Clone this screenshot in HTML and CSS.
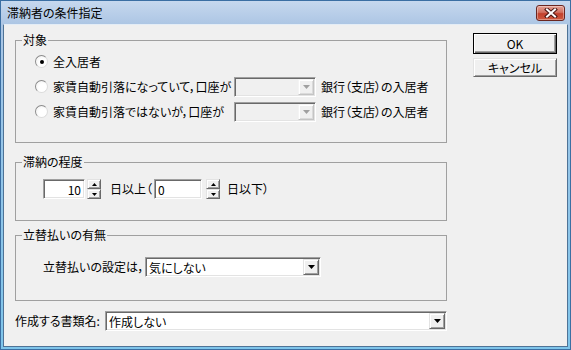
FILE: index.html
```html
<!DOCTYPE html>
<html lang="ja">
  <head>
    <meta charset="UTF-8" />
    <meta name="viewport" content="width=device-width, initial-scale=1.0" />
    <title>滞納者の条件指定</title>
    <link rel="stylesheet" href="styles.css">
  </head>
  <body>
    <div class="window">
      <div class="titlebar">
        <span class="title">滞納者の条件指定</span>
        <span class="closeBtn">
          <svg width="14" height="10" viewBox="0 0 14 10">
            <path d="M3 1.5L11 8.5M11 1.5L3 8.5" stroke="#4a1612" stroke-width="4" stroke-linecap="square" />
            <path d="M3 1.5L11 8.5M11 1.5L3 8.5" stroke="#fff" stroke-width="2" stroke-linecap="square" />
          </svg>
        </span>
      </div>

      <div class="client">
        <div class="main">
          <fieldset class="group">
            <legend>対象</legend>
            <div class="targetBody">
              <span class="radio checked"></span>
              <span class="wide">全入居者</span>

              <span class="radio"></span>
              <span>家賃自動引落になっていて，口座が</span>
              <div class="combo disabled">
                <span class="comboValue"></span>
                <span class="dropBtn">
                  <svg width="7" height="4"><path d="M0 0h7L3.5 4z" /></svg>
                </span>
              </div>
              <span class="after">銀行（支店）の入居者</span>

              <span class="radio"></span>
              <span>家賃自動引落ではないが，口座が</span>
              <div class="combo disabled">
                <span class="comboValue"></span>
                <span class="dropBtn">
                  <svg width="7" height="4"><path d="M0 0h7L3.5 4z" /></svg>
                </span>
              </div>
              <span class="after">銀行（支店）の入居者</span>
            </div>
          </fieldset>

          <fieldset class="group daysGroup">
            <legend>滞納の程度</legend>
            <div class="daysBody">
              <span class="edit num" style="width: 42px">10</span>
              <span class="spin">
                <span class="spinBtn"><svg width="5" height="3"><path d="M2.5 0L5 3H0z" /></svg></span>
                <span class="spinBtn"><svg width="5" height="3"><path d="M0 0h5L2.5 3z" /></svg></span>
              </span>
              <span class="unit">日以上（</span>
              <span class="edit" style="width: 48px">0</span>
              <span class="spin spin2">
                <span class="spinBtn"><svg width="5" height="3"><path d="M2.5 0L5 3H0z" /></svg></span>
                <span class="spinBtn"><svg width="5" height="3"><path d="M0 0h5L2.5 3z" /></svg></span>
              </span>
              <span class="unit unit2">日以下）</span>
            </div>
          </fieldset>

          <fieldset class="group advanceGroup">
            <legend>立替払いの有無</legend>
            <div class="advanceBody">
              <span class="advanceLabel">立替払いの設定は，</span>
              <div class="combo advanceCombo">
                <span class="comboValue">気にしない</span>
                <span class="dropBtn">
                  <svg width="7" height="4"><path d="M0 0h7L3.5 4z" /></svg>
                </span>
              </div>
            </div>
          </fieldset>

          <div class="docRow">
            <span class="docLabel">作成する書類名:</span>
            <div class="combo docCombo">
              <span class="comboValue">作成しない</span>
              <span class="dropBtn">
                <svg width="7" height="4"><path d="M0 0h7L3.5 4z" /></svg>
              </span>
            </div>
          </div>
        </div>

        <div class="actions">
          <button class="btn default">OK</button>
          <button class="btn cancel">キャンセル</button>
        </div>
      </div>
    </div>
  </body>
</html>
```

FILE: styles.css
```css
* {
  box-sizing: border-box;
}

body {
  margin: 0;
  font-family: "Noto Sans CJK JP", sans-serif;
  font-size: 12px;
  line-height: 14px;
  color: #000;
  font-feature-settings: "palt";
}

.window {
  width: 571px;
  height: 350px;
  display: flex;
  flex-direction: column;
  border: 1px solid #3b6fa3;
  background: linear-gradient(#c6d8ee 0, #adc6e4 23px, #9ec6e8 80px, #7ec4ea 100%);
}

.titlebar {
  height: 23px;
  display: flex;
  align-items: center;
  padding: 0 5px 0 6px;
}

.closeBtn {
  margin-left: auto;
  width: 29px;
  height: 16px;
  display: flex;
  align-items: center;
  justify-content: center;
  border: 1px solid #6b2620;
  border-radius: 3px;
  background: linear-gradient(#e4a195 0, #d2705f 45%, #c2402c 55%, #cf5a3f 100%);
  box-shadow: inset 0 0 0 1px rgba(255, 255, 255, 0.35);
}

.client {
  flex: 1;
  margin: 0 2px 2px;
  border: 1px solid #4f7396;
  border-top-color: #e4edf6;
  background: #f0f0f0;
  display: flex;
  padding: 8px 10px 0 11px;
}

.main {
  width: 432px;
}

/* group boxes */
.group {
  margin: 0;
  padding: 0;
  min-width: 0;
  border: 1px solid #a0a0a0;
}

.group legend {
  margin-left: 6px;
  padding: 0 1px;
  line-height: 14px;
}

.daysGroup {
  margin-top: 12px;
}

.advanceGroup {
  margin-top: 7px;
}

.targetBody {
  height: 95px;
  padding: 2px 0 0 19px;
  display: grid;
  grid-template-columns: 18px 181px 82px auto;
  grid-auto-rows: 25px;
  align-items: center;
  align-content: start;
}

.wide {
  grid-column: 2 / 5;
}

.after {
  margin-left: 5px;
}

.radio {
  width: 13px;
  height: 13px;
  border-radius: 50%;
  border: 1px solid;
  border-color: #8c8c8c #dcdcdc #dcdcdc #8c8c8c;
  background: radial-gradient(circle at 60% 60%, #fff 40%, #ececec 100%);
  display: flex;
  align-items: center;
  justify-content: center;
}

.radio.checked::after {
  content: "";
  width: 4px;
  height: 4px;
  border-radius: 50%;
  background: #000;
}

/* edit fields and combos */
.edit,
.combo {
  height: 20px;
  background: #fff;
  border: 1px solid;
  border-color: #a0a0a0 #fff #fff #a0a0a0;
  box-shadow: inset 1px 1px 0 #696969, inset -1px -1px 0 #e3e3e3;
}

.edit {
  padding: 2px 3px 0;
  line-height: 16px;
}

.edit.num {
  text-align: right;
}

.combo {
  display: flex;
  padding: 1px;
}

.comboValue {
  flex: 1;
  padding: 1px 0 0 2px;
  line-height: 15px;
  white-space: nowrap;
}

.dropBtn,
.spinBtn,
.btn {
  background: #f0f0f0;
  border: 1px solid;
  border-color: #e3e3e3 #696969 #696969 #e3e3e3;
  box-shadow: inset 1px 1px 0 #fff, inset -1px -1px 0 #a0a0a0;
}

.dropBtn {
  width: 16px;
  display: flex;
  align-items: center;
  justify-content: center;
}

.dropBtn svg,
.spinBtn svg {
  fill: #000;
}

.combo.disabled {
  background: #f0f0f0;
}

.combo.disabled .dropBtn {
  border-color: #f4f4f4 #c4c4c4 #c4c4c4 #f4f4f4;
  box-shadow: inset 1px 1px 0 #fff, inset -1px -1px 0 #dadada;
}

.combo.disabled .dropBtn svg {
  fill: #a0a0a0;
}

.daysBody {
  height: 51px;
  padding: 10px 0 0 27px;
  display: flex;
  align-items: flex-start;
}

.spin {
  width: 14px;
  height: 20px;
  margin-left: 2px;
  display: flex;
  flex-direction: column;
}

.spin2 {
  margin-left: 4px;
}

.spinBtn {
  height: 10px;
  display: flex;
  align-items: center;
  justify-content: center;
}

.unit {
  line-height: 20px;
  margin: 0 2px 0 9px;
}

.unit2 {
  margin-left: 7px;
}

.advanceBody {
  height: 58px;
  padding: 15px 0 0 27px;
  display: flex;
  align-items: flex-start;
}

.advanceLabel {
  line-height: 20px;
  width: 102px;
}

.advanceCombo {
  width: 176px;
}

.docRow {
  margin-top: 10px;
  display: flex;
  align-items: center;
}

.docLabel {
  width: 90px;
}

.docCombo {
  flex: 1;
}

/* buttons */
.actions {
  margin-left: 26px;
  width: 84px;
  display: flex;
  flex-direction: column;
}

.btn {
  font: inherit;
  font-feature-settings: "palt";
  padding: 0;
  color: #000;
  display: flex;
  align-items: center;
  justify-content: center;
}

.btn.default {
  height: 21px;
  border: 1px solid #000;
  box-shadow: inset 1px 1px 0 #fff, inset -1px -1px 0 #696969, inset -2px -2px 0 #a0a0a0;
}

.btn.cancel {
  height: 19px;
  margin-top: 4px;
}
```
